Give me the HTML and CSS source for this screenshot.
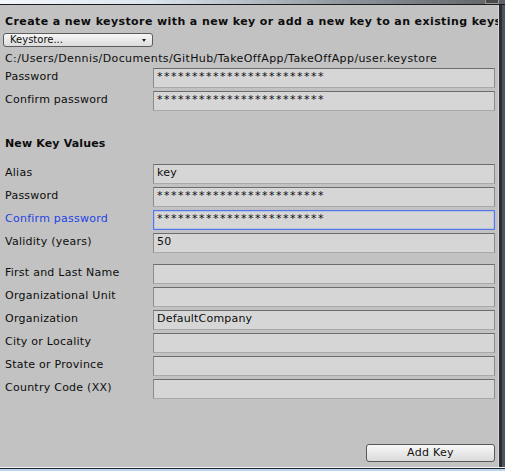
FILE: index.html
```html
<!DOCTYPE html>
<html>
<head>
<meta charset="utf-8">
<link rel="stylesheet" href="styles.css">
</head>
<body>
<div class="window">
  <div class="topbar"><div class="topbox"></div></div>
  <div class="middle">
    <div class="panel">
      <div class="title">Create a new keystore with a new key or add a new key to an existing keystore</div>
      <div class="dropdown"><span>Keystore...</span><span class="arrow"></span></div>
      <div class="path">C:/Users/Dennis/Documents/GitHub/TakeOffApp/TakeOffApp/user.keystore</div>
      <div class="row first"><label>Password</label><div class="field pw">************************</div></div>
      <div class="row"><label>Confirm password</label><div class="field pw">************************</div></div>

      <div class="heading">New Key Values</div>
      <div class="row alias"><label>Alias</label><div class="field">key</div></div>
      <div class="row"><label>Password</label><div class="field pw">************************</div></div>
      <div class="row"><label class="focus-label">Confirm password</label><div class="field pw focused">************************</div></div>
      <div class="row"><label>Validity (years)</label><div class="field">50</div></div>

      <div class="row group"><label>First and Last Name</label><div class="field"></div></div>
      <div class="row"><label>Organizational Unit</label><div class="field"></div></div>
      <div class="row"><label>Organization</label><div class="field">DefaultCompany</div></div>
      <div class="row"><label>City or Locality</label><div class="field"></div></div>
      <div class="row"><label>State or Province</label><div class="field"></div></div>
      <div class="row"><label>Country Code (XX)</label><div class="field"></div></div>

      <div class="actions"><button class="btn">Add Key</button></div>
    </div>
    <div class="edge"></div>
  </div>
  <div class="bottombar"></div>
</div>
</body>
</html>
```
FILE: styles.css
```css
* { box-sizing: border-box; }
html, body { margin: 0; padding: 0; }
body {
  font-family: "DejaVu Sans", "Liberation Sans", sans-serif;
  font-size: 11px;
  line-height: 13px;
  color: #0d0d0d;
  background: #c2c2c2;
}
.window {
  width: 505px;
  height: 471px;
  display: flex;
  flex-direction: column;
  overflow: hidden;
}
.topbar {
  height: 5px;
  position: relative;
  background: linear-gradient(to right, #f2f7fc 0, #dbe5ee 30%, #8b9299 70%, #5e6266 100%);
  border-bottom: 1px solid #1c1c1c;
}
.topbox {
  position: absolute;
  right: 6px;
  top: 0;
  width: 14px;
  height: 4px;
  border: 1px solid #9a9a9a;
  border-top: none;
  background: #4a4a4a;
}
.middle {
  flex: 1;
  display: flex;
  min-height: 0;
}
.panel {
  width: 498px;
  background: #c2c2c2;
  overflow: hidden;
  padding-left: 5px;
}
.edge {
  flex: 1;
  background: linear-gradient(to right, #d9d9d9 0 1px, #2a2f36 1px 4px, #4d535a 4px);
}
.bottombar {
  height: 4px;
  background: linear-gradient(to bottom, #f2f2f2 0 1px, #1e252c 1px 2px, #bcd6ee 2px);
}
.title {
  margin-top: 10px;
  font-weight: bold;
  white-space: nowrap;
  letter-spacing: 0.4px;
}
.dropdown {
  position: relative;
  margin-top: 5px;
  margin-left: -2px;
  width: 150px;
  height: 14px;
  border: 1px solid #5c5c5c;
  border-radius: 3px;
  background: linear-gradient(#f7f7f7, #dcdcdc);
  font-size: 10px;
  line-height: 12px;
  padding-left: 6px;
  color: #111;
}
.arrow {
  position: absolute;
  right: 6px;
  top: 5px;
  width: 0;
  height: 0;
  border-left: 2.5px solid transparent;
  border-right: 2.5px solid transparent;
  border-top: 3px solid #222;
}
.path {
  margin-top: 5px;
  white-space: nowrap;
  letter-spacing: 0.4px;
}
.row {
  display: grid;
  grid-template-columns: 148px 342px;
  height: 20px;
  margin-top: 3px;
}
.row label {
  padding-top: 2px;
  letter-spacing: 0.25px;
  white-space: nowrap;
}
.row.first { margin-top: 3px; }
.row.alias { margin-top: 14px; }
.row.group { margin-top: 11px; }
.heading {
  margin-top: 26px;
  font-weight: bold;
  letter-spacing: 0.15px;
}
.field {
  height: 20px;
  border: 1px solid;
  border-color: #6c6c6c #8b8b8b #a9a9a9 #8b8b8b;
  background: #d6d6d6;
  padding: 1px 0 0 3px;
  white-space: nowrap;
  overflow: hidden;
  letter-spacing: 0.2px;
}
.field.pw { letter-spacing: 1.5px; }
.field.focused {
  border-color: #5676ee;
  box-shadow: inset 0 0 0 1px rgba(130, 155, 240, 0.35);
}
.focus-label { color: #2244e4; }
.actions {
  display: flex;
  justify-content: flex-end;
  padding-right: 3px;
  margin-top: 45px;
}
.btn {
  width: 129px;
  height: 18px;
  padding: 0;
  border: 1px solid #595959;
  border-radius: 3px;
  background: linear-gradient(#f8f8f8, #dadada);
  font-family: "DejaVu Sans", "Liberation Sans", sans-serif;
  font-size: 11px;
  line-height: 16px;
  color: #111;
  letter-spacing: 0.3px;
}
```
